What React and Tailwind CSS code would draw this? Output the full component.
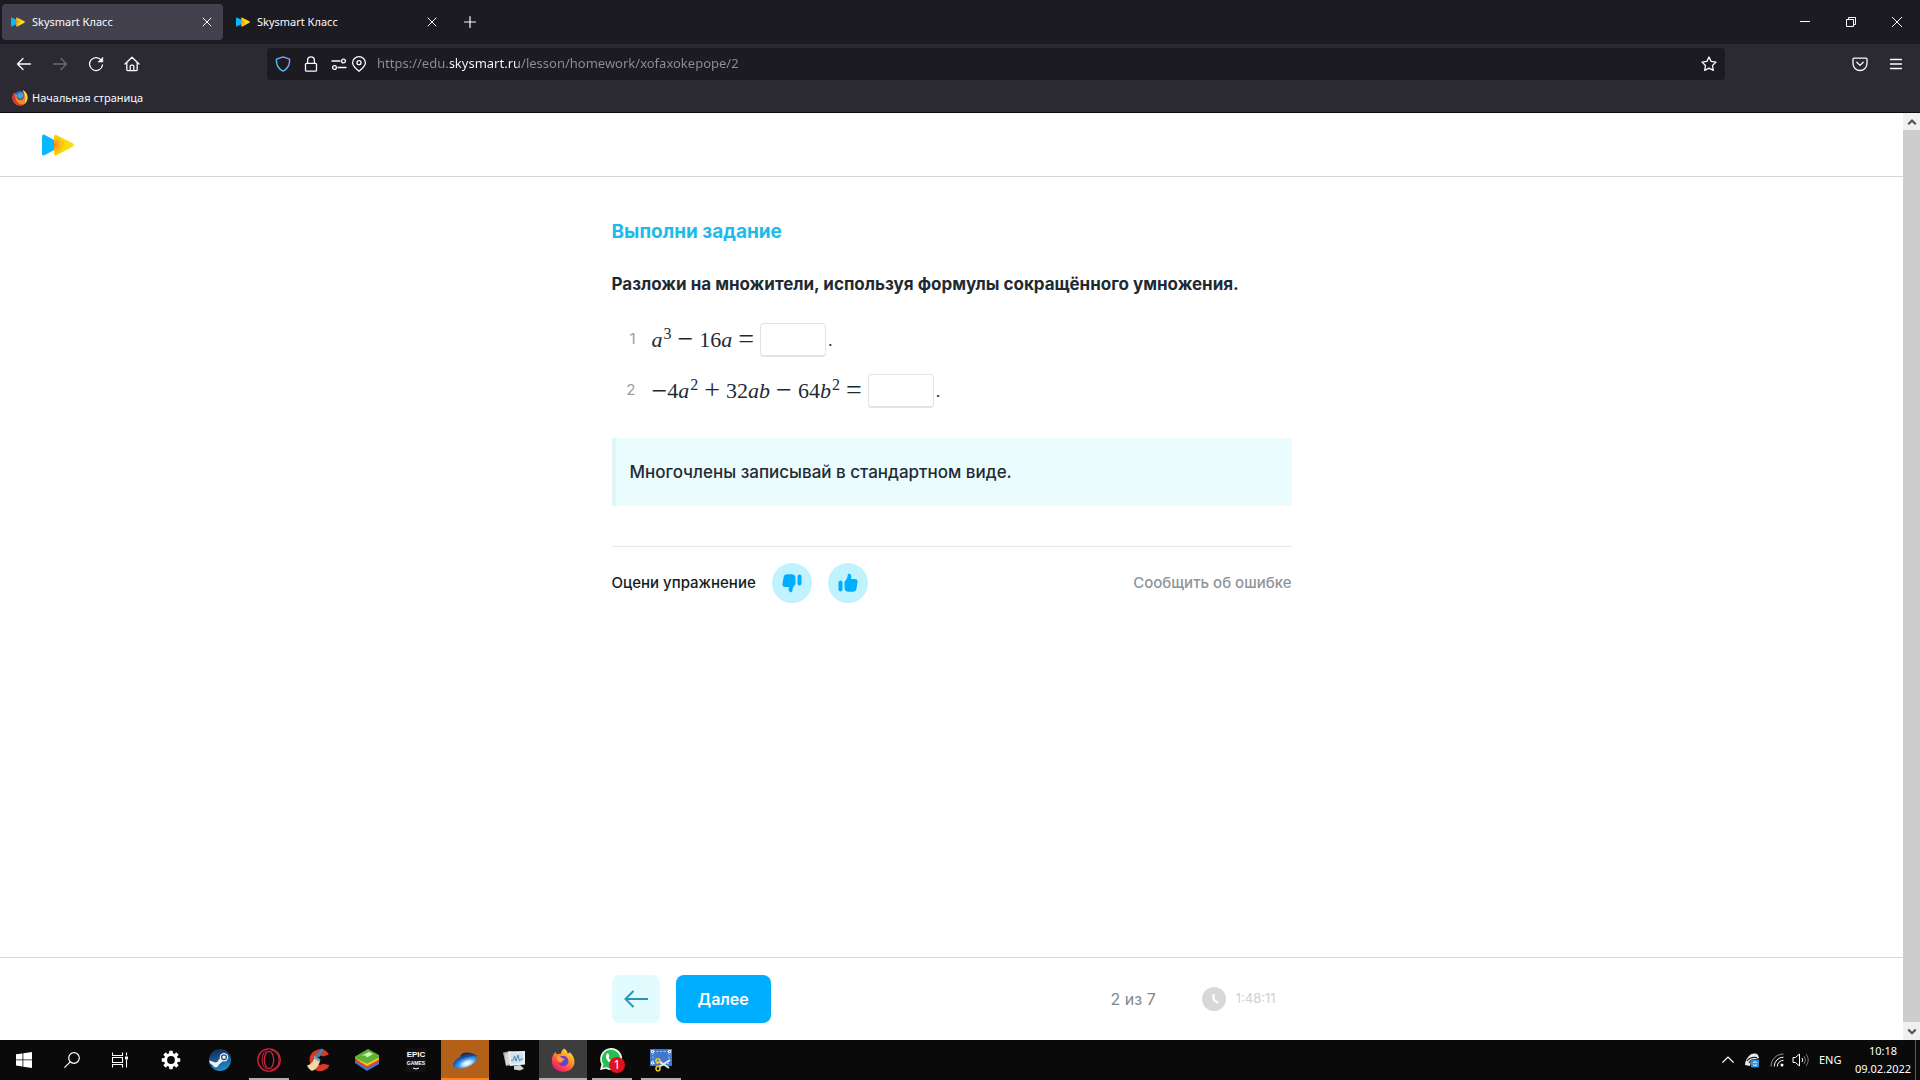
import { useState } from 'react'

const TABS = [
  { id: 1, title: 'Skysmart Класс', active: true },
  { id: 2, title: 'Skysmart Класс', active: false },
]

function SkysmartLogo({ className }) {
  return (
    <svg viewBox="0 0 32 22" className={className} aria-hidden="true">
      <defs>
        <radialGradient id="skyGlow" cx="0.05" cy="0.5" r="0.5">
          <stop offset="0" stopColor="#f58220" />
          <stop offset="0.4" stopColor="#fbb012" />
          <stop offset="1" stopColor="#fbdd0b" />
        </radialGradient>
      </defs>
      <path d="M0 2.5Q0 0 2.4 .8L17 8.5q4 2.5 0 5L2.4 21.2Q0 22 0 19.5z" fill="#08b8fa" />
      <path d="M12 2.5q0-2.5 2.6-1.4L30.600 9.300q2.400 1.700 0 3.400L14.600 21.200Q12 22 12 19.500z" fill="url(#skyGlow)" />
    </svg>
  )
}

function Stroke({ size = 16, width = 1.3, className, children }) {
  return (
    <svg width={size} height={size} viewBox="0 0 16 16" fill="none" stroke="currentColor" strokeWidth={width} strokeLinecap="round" strokeLinejoin="round" className={className} aria-hidden="true">
      {children}
    </svg>
  )
}

function FirefoxIcon({ size }) {
  return (
    <svg width={size} height={size} viewBox="0 0 24 24" aria-hidden="true">
      <defs>
        <linearGradient id="foxFire" x1="0.9" y1="0" x2="0.2" y2="1">
          <stop offset="0" stopColor="#fff04a" />
          <stop offset="0.4" stopColor="#ff9a1e" />
          <stop offset="0.75" stopColor="#ff3f50" />
          <stop offset="1" stopColor="#d5127e" />
        </linearGradient>
      </defs>
      <path d="M13 .5c2 1 3.300 2.700 3.700 5 1 .2 1.500-.5 1.700-1.500 3 2.500 5.100 5.800 5.100 10 0 5.700-5 9.700-11.300 9.700C5.500 23.700.8 19.400.8 13c0-3.700 1.500-6.800 3.700-9.200.2 1.300.7 2 1.500 2.500 1.200-.6 2.600-.7 3.600-.4C10.400 3.600 11.500 1.800 13 .5z" fill="url(#foxFire)" />
      <path d="M8 9.300c2-1.600 6-1.800 8 .3 2.300 2.600 1.700 6.500-1 8-3 1.700-7 .3-7.500-3 1.300 1 3.300.6 4.300-.8-2-.3-3.700-1.700-3.800-4.500z" fill="#6b3fd4" />
      <path d="M6 8.500c1.500-.5 3.500 0 5 1.800 1 .3 2.200.3 2.500 1-.4 1.200-2.500 1.300-3 2.700-2.800.4-5-2.200-4.500-5.500z" fill="#ffa436" />
    </svg>
  )
}

function BookmarkFoxIcon() {
  return (
    <svg width="16" height="16" viewBox="0 0 16 16" aria-hidden="true">
      <circle cx="8" cy="7.500" r="6.500" fill="#2f62b8" />
      <circle cx="8.500" cy="5.500" r="3" fill="#4f9be0" />
      <path d="M10.500 0c3 1.200 5 4 5 7.500C15.500 12 12.200 15.500 8 15.500S.5 12.300.5 8c0-2.500.8-4.300 2-5.500l.8 2 2.200.5c-1 .8-1 2.200-.3 3.200 1 2 3.900 2.400 5.500 1.200 2.200-1.600 2-5.800-.2-9.400z" fill="#f28b1c" />
      <path d="M.5 7.500C.6 12.500 4 15.500 8 15.500c1.500 0 2.500-.3 3.500-.8-4 0-7.500-2.200-8-6.700L2.500 2.500C1.200 3.800.5 5.500.5 7.500z" fill="#e0303a" />
      <path d="M10.500 0c3 1.200 5 4 5 7.500 0 2.500-1.200 4.800-3 6.200 1.700-4.500 1-9.700-2-13.700z" fill="#ffdc3e" />
    </svg>
  )
}

function TabStrip() {
  return (
    <header className="flex h-11 items-center bg-[#1c1b22] pl-0.5 text-[#fbfbfe]">
      <div className="flex flex-1 items-center gap-1">
        {TABS.map(tab => (
          <div key={tab.id} className={`flex h-9 w-[221px] items-center rounded pl-[9px] pr-2 ${tab.active ? 'bg-[#42414d]' : ''}`}>
            <button className="flex flex-1 items-center gap-[7px] text-left text-[11px]">
              <SkysmartLogo className="h-[10px] w-[14px]" />
              {tab.title}
            </button>
            <button aria-label="Закрыть вкладку" className="grid size-4 place-items-center">
              <Stroke size={16} width={1}><path d="M4 4l8 8M12 4l-8 8" /></Stroke>
            </button>
          </div>
        ))}
        <button aria-label="Новая вкладка" className="ml-1.5 grid size-6 place-items-center">
          <Stroke width={1.200}><path d="M8 2.500v11M2.500 8h11" /></Stroke>
        </button>
      </div>
      <div className="flex">
        <button aria-label="Свернуть" className="grid h-11 w-[46px] place-items-center">
          <svg width="10" height="10" stroke="currentColor" aria-hidden="true"><path d="M0 4.500h10" /></svg>
        </button>
        <button aria-label="Восстановить" className="grid h-11 w-[46px] place-items-center">
          <svg width="10" height="10" fill="none" stroke="currentColor" aria-hidden="true"><path d="M.5 2.500h7v7h-7zM2.500 2.500v-2h7v7h-2" /></svg>
        </button>
        <button aria-label="Закрыть" className="grid h-11 w-[46px] place-items-center">
          <svg width="10" height="10" stroke="currentColor" aria-hidden="true"><path d="M0 0l10 10M10 0L0 10" /></svg>
        </button>
      </div>
    </header>
  )
}

function Toolbar() {
  const [url, setUrl] = useState('https://edu.skysmart.ru/lesson/homework/xofaxokepope/2')
  return (
    <div className="flex h-10 items-center bg-[#2b2a33] pl-4 pr-4 text-[#fbfbfe]">
      <nav className="flex w-[251px] items-center gap-5">
        <button aria-label="Назад"><Stroke><path d="M1.500 8h13M7 2.500L1.500 8 7 13.500" /></Stroke></button>
        <button aria-label="Вперёд" className="text-[#6a6972]"><Stroke><path d="M1.500 8h13M9 2.500L14.500 8 9 13.500" /></Stroke></button>
        <button aria-label="Обновить">
          <Stroke><path d="M13.500 4.500A6.500 6.500 0 1 0 14.500 9" /><path d="M14.800 1.500v4.500h-4.500z" fill="currentColor" strokeWidth="0.6" /></Stroke>
        </button>
        <button aria-label="Домой">
          <Stroke><path d="M1 8l7-6.700L15 8M2.800 6.500V13.500q0 1.200 1.200 1.200h8q1.200 0 1.200-1.200V6.500M6.200 14.500v-4.200q0-1.200 1.200-1.200h1.200q1.200 0 1.200 1.200v4.200" /></Stroke>
        </button>
      </nav>
      <div className="flex h-8 flex-1 items-center rounded bg-[#1c1b22] pl-2 pr-2">
        <svg width="16" height="16" viewBox="0 0 16 16" fill="none" strokeWidth="1.400" strokeLinejoin="round" aria-hidden="true">
          <defs>
            <linearGradient id="shield" x1="1" y1="0" x2="0" y2="1">
              <stop offset="0" stopColor="#b58cf0" />
              <stop offset="0.5" stopColor="#5fb4ee" />
              <stop offset="1" stopColor="#3fc6e8" />
            </linearGradient>
          </defs>
          <path d="M8 .9l6.500 2.300c.5 4.800-1.500 9.500-6.500 12-5-2.500-7-7.200-6.500-12z" stroke="url(#shield)" />
        </svg>
        <Stroke className="ml-3"><path d="M3.500 7.300h9q1 0 1 1v5.900q0 1-1 1h-9q-1 0-1-1V8.300q0-1 1-1zM4.600 7V4.200a3.400 3.400 0 0 1 6.800 0V7" /></Stroke>
        <Stroke className="ml-3"><path d="M1 5h8M7 11.500h8" /><circle cx="12.500" cy="5" r="1.900" /><circle cx="3.500" cy="11.500" r="1.900" /></Stroke>
        <Stroke className="ml-1"><path d="M8 15.300C4.500 12.500 1.600 10 1.600 6.800a6.400 6.100 0 0 1 12.800 0C14.400 10 11.500 12.500 8 15.300z" /><circle cx="8" cy="6.700" r="2" /></Stroke>
        {/* domain part is lighter than the rest of the address */}
        <input
          aria-label="Адрес страницы"
          value={url}
          onChange={e => setUrl(e.target.value)}
          className="ml-2.5 min-w-0 flex-1 bg-[linear-gradient(90deg,#8f8e96_73px,#fbfbfe_73px,#fbfbfe_142px,#8f8e96_142px)] bg-clip-text text-[13px] text-transparent outline-none"
        />
        <button aria-label="Добавить в закладки">
          <Stroke><path d="M8 1l2.100 4.400 4.900.7-3.500 3.400.8 4.900L8 12.100l-4.300 2.300.8-4.900L1 6.100l4.900-.7z" /></Stroke>
        </button>
      </div>
      <div className="flex w-[179px] items-center justify-end gap-5">
        <button aria-label="Pocket"><Stroke><path d="M2 2.200h12q1 0 1 1V7.500a7 7 0 0 1-14 0V3.200q0-1 1-1zM4.800 6.300L8 9.400l3.200-3.100" /></Stroke></button>
        <button aria-label="Меню"><Stroke><path d="M2.500 3.500h11M2.500 8h11M2.500 12.500h11" /></Stroke></button>
      </div>
    </div>
  )
}

function Bookmarks() {
  return (
    <div className="flex h-[29px] items-center border-b border-[#0c0c0d] bg-[#2b2a33] pl-3 text-[11px] text-[#fbfbfe]">
      <a href="#home" className="flex items-center gap-1">
        <BookmarkFoxIcon />
        Начальная страница
      </a>
    </div>
  )
}

function Op({ children }) {
  return <span className="text-[28px]">{children}</span>
}

function Sup({ children }) {
  return <sup className="top-[-6px] ml-px text-base leading-none">{children}</sup>
}

function Answer({ label, value, onChange }) {
  return (
    <input
      aria-label={label}
      value={value}
      onChange={onChange}
      className="ml-1.5 h-[34px] w-[66px] rounded border border-b-2 border-[#e3e3e3] bg-white px-2 text-center text-lg outline-none"
    />
  )
}

function Thumb({ down }) {
  return (
    <svg width="20" height="20" viewBox="0 0 20 20" fill="#00aeff" className={down ? 'rotate-180' : ''} aria-hidden="true">
      <rect x="0.500" y="7.500" width="4" height="11" rx="2" />
      <path d="M6.500 9.500c0-1.300 1.200-2 2-3.200.8-1.200 1-2.500 1.200-4C9.900.8 11 .5 12 1c1.500.8 1.700 2.700 1 5h3.800c2 0 3 1.200 2.700 3l-1 6.500c-.4 2.200-1.500 3.200-3.700 3.200h-4.300c-2.700 0-4-1.300-4-3.700z" />
    </svg>
  )
}

function Exercise() {
  const [first, setFirst] = useState('')
  const [second, setSecond] = useState('')
  return (
    <section className="mx-auto w-full max-w-[680px] flex-1 pt-[39px] text-[#1f2b33]">
      <h1 className="text-[19px] font-bold leading-8 text-[#1cbbea]">Выполни задание</h1>
      <p className="mt-6 text-[17px] font-bold leading-6">Разложи на множители, используя формулы сокращённого умножения.</p>

      <ol className="mt-[18px]">
        <li className="flex h-[51px] items-center">
          <span className="w-6 text-right text-[15px] text-[#9a9fa2]">1</span>
          <span className="ml-4 flex items-center font-['Liberation_Serif',serif] text-[22px] leading-6">
            <i>a</i><Sup>3</Sup>
            <span className="mx-1.5"><Op>−</Op></span>
            16<i>a</i>
            <span className="ml-1.5"><Op>=</Op></span>
          </span>
          <Answer label="Ответ 1" value={first} onChange={e => setFirst(e.target.value)} />
          <span className="ml-0.5">.</span>
        </li>
        <li className="flex h-[51px] items-center">
          <span className="w-6 text-right text-[15px] text-[#9a9fa2]">2</span>
          <span className="ml-4 flex items-center font-['Liberation_Serif',serif] text-[22px] leading-6">
            <Op>−</Op>4<i>a</i><Sup>2</Sup>
            <span className="mx-1.5"><Op>+</Op></span>
            32<i>ab</i>
            <span className="mx-1.5"><Op>−</Op></span>
            64<i>b</i><Sup>2</Sup>
            <span className="ml-1.5"><Op>=</Op></span>
          </span>
          <Answer label="Ответ 2" value={second} onChange={e => setSecond(e.target.value)} />
          <span className="ml-0.5">.</span>
        </li>
      </ol>

      <p className="mt-[22px] border-l-4 border-[#e0f5f5] bg-[#ebfcff] px-3.5 py-[22px] text-[17px] font-medium leading-6">Многочлены записывай в стандартном виде.</p>

      <div className="mt-10 flex items-center border-t border-[#e6e8ea] pt-4 text-[15px] font-medium">
        <span className="text-[#111c24]">Оцени упражнение</span>
        <button aria-label="Не нравится" className="ml-4 grid size-10 place-items-center rounded-full bg-[#c0f3ff]"><Thumb down /></button>
        <button aria-label="Нравится" className="ml-4 grid size-10 place-items-center rounded-full bg-[#c0f3ff]"><Thumb /></button>
        <a href="#report" className="ml-auto text-[#8f9598]">Сообщить об ошибке</a>
      </div>
    </section>
  )
}

function LessonFooter() {
  return (
    <footer className="border-t border-[#d5d7d9]">
      <div className="mx-auto flex h-[82px] w-full max-w-[680px] items-center">
        <button aria-label="Назад к заданию" className="grid size-12 place-items-center rounded-lg bg-[#e2fbff]">
          <svg width="24" height="18" viewBox="0 0 24 18" fill="none" stroke="#2796b8" strokeWidth="2" aria-hidden="true"><path d="M24 9H1.500M9.500 1L1.500 9l8 8" /></svg>
        </button>
        <button className="ml-4 h-12 rounded-lg bg-[#00aeff] px-[22px] text-base font-semibold text-white">Далее</button>
        <span className="ml-auto text-base text-[#7d888c]">2 из 7</span>
        <svg width="24" height="24" viewBox="0 0 24 24" className="ml-[46px]" aria-hidden="true">
          <circle cx="12" cy="12" r="12" fill="#d8d8d8" />
          <path d="M11.500 7v5.500l4.500 3.500" fill="none" stroke="#fff" strokeWidth="2.200" />
        </svg>
        <time className="ml-2.5 mr-4 text-[13px] text-[#d0d0d0]">1:48:11</time>
      </div>
    </footer>
  )
}

function ScrollBar() {
  return (
    <div className="flex w-[17px] flex-col bg-[#f0f0f0] text-[#555]" aria-hidden="true">
      <span className="grid h-[17px] place-items-center"><Stroke size={12} width={3}><path d="M3 11l5-5 5 5" strokeLinecap="butt" /></Stroke></span>
      <span className="flex-1 bg-[#cdcdcd]" />
      <span className="grid h-[18px] place-items-center"><Stroke size={12} width={3}><path d="M3 6l5 5 5-5" strokeLinecap="butt" /></Stroke></span>
    </div>
  )
}

function WindowsIcon() {
  return <svg width="16" height="16" viewBox="0 0 16 16" fill="#fff" aria-hidden="true"><path d="M0 2.300l6.500-.9v6.100H0zM7.300 1.300L16 0v7.500H7.300zM0 8.300h6.500v6.200L0 13.600zM7.300 8.300H16V16l-8.700-1.300z" /></svg>
}

function SearchIcon() {
  return <svg width="16" height="16" viewBox="0 0 16 16" fill="none" stroke="#fff" strokeWidth="1.200" aria-hidden="true"><circle cx="10" cy="6" r="5.300" /><path d="M6.200 9.800L.4 15.600" /></svg>
}

function TaskViewIcon() {
  return (
    <svg width="16" height="16" viewBox="0 0 16 16" fill="none" stroke="#fff" strokeWidth="1.100" aria-hidden="true">
      <path d="M.5.500V3.500h10V.500M.5 15.500v-3h10v3M.5 5.500h10v5H.5zM14.500.500v3M14.500 8v7.500" />
      <path d="M13 4.500h3v3h-3z" fill="#fff" stroke="none" />
    </svg>
  )
}

function GearIcon() {
  return (
    <svg width="20" height="20" viewBox="-10 -10 20 20" fill="#fff" aria-hidden="true">
      {[0, 45, 90, 135].map(a => <rect key={a} x="-1.800" y="-9.200" width="3.600" height="18.400" transform={`rotate(${a})`} />)}
      <circle r="7" />
      <circle r="3.900" fill="#0a0a0a" />
    </svg>
  )
}

function SteamIcon() {
  return (
    <svg width="22" height="22" viewBox="0 0 22 22" aria-hidden="true">
      <defs>
        <linearGradient id="steam" x1="0" y1="0" x2="0.300" y2="1">
          <stop offset="0" stopColor="#12224b" />
          <stop offset="1" stopColor="#1f86c4" />
        </linearGradient>
      </defs>
      <circle cx="11" cy="11" r="11" fill="url(#steam)" />
      <path d="M.3 11.200l5.800 2.400 2-.6 3.200-4.200 2.300 3.700-3.800 3c-.3 2-1.800 3-3.400 2.700-1.400-.2-2.200-1-2.700-2.200L.8 14.300z" fill="#eef3f7" />
      <circle cx="15" cy="8.300" r="4.200" fill="#eef3f7" />
      <circle cx="15" cy="8.300" r="2.400" fill="#eef3f7" stroke="#24486f" strokeWidth="1.200" />
    </svg>
  )
}

function OperaIcon() {
  return (
    <svg width="24" height="24" viewBox="0 0 24 24" fill="none" stroke="#d3233f" strokeWidth="1.300" aria-hidden="true">
      <circle cx="12" cy="12" r="11.200" />
      <ellipse cx="12" cy="12" rx="4.700" ry="8.600" />
      <path d="M9.500 2.500C4 4.500 3.500 18 9.500 21.500M14 2c6 1.500 8 6 8 10s-2 8.500-8 10" strokeWidth="1" />
    </svg>
  )
}

function CCleanerIcon() {
  return (
    <svg width="24" height="24" viewBox="0 0 24 24" aria-hidden="true">
      <path d="M23 6.500C20.500 2 16 .5 11.500 1.700 5 3.500 2.500 9 4 15c1.500 6 7.500 9.500 13.500 7.500 3-1 5-2.700 5.800-5.500L17 15.800c-2.500 2-6 1.200-7-2-1-3.800 3-7.800 7-5.300z" fill="#d93a25" />
      <path d="M15.500.5l2 1-4.500 8-3.500-2z" fill="#3b86b5" />
      <path d="M9 9l5 4c-1 4.500-4 8.500-8 10-2-1-4-3-5-5.500 4-1 6.500-4 8-8.500z" fill="#f1d9a6" />
      <path d="M8.500 7.500l6 4-1 2.500L7.500 10z" fill="#5baed3" />
    </svg>
  )
}

function BlueStacksIcon() {
  return (
    <svg width="26" height="24" viewBox="0 0 26 24" aria-hidden="true">
      <path d="M1 15l12 8 12-7v-3H1z" fill="#2f80dd" />
      <path d="M1 13l12 7.500L25 14v-2.500H1z" fill="#e8402d" />
      <path d="M1 10.500L13 18l12-6.500V9.500H1z" fill="#ffc42c" />
      <path d="M1 8.500L14 1l11 6v2.500L13 15.700 1 10z" fill="#5cb531" />
      <path d="M8 7.500l7-3.500 4 2-6 3.500-1.500-2z" fill="#d9f2c4" />
    </svg>
  )
}

function EpicIcon() {
  return (
    <span className="flex h-6 w-5 flex-col items-center bg-[#121212] font-['Liberation_Sans',sans-serif] font-bold text-white">
      <span className="text-[8px] leading-[13px]">EPIC</span>
      <span className="text-[5px] leading-[5px]">GAMES</span>
      <svg width="8" height="4" stroke="#fff" fill="none" aria-hidden="true"><path d="M1 2l3 1 3-1" /></svg>
    </span>
  )
}

function OrbIcon() {
  return (
    <svg width="26" height="22" viewBox="0 0 26 22" aria-hidden="true">
      <defs>
        <radialGradient id="orb" cx="0.550" cy="0.700" r="0.600">
          <stop offset="0" stopColor="#fff" />
          <stop offset="0.250" stopColor="#cfeaff" />
          <stop offset="0.600" stopColor="#3c97ec" />
          <stop offset="1" stopColor="#1458b4" />
        </radialGradient>
      </defs>
      <path d="M8 8c1-4 4-5 8-4.500 4 .5 7 1.500 9 3.500l-3 3-15 2z" fill="#22303f" />
      <ellipse cx="13" cy="12.500" rx="12.500" ry="6" transform="rotate(-20 13 12.500)" fill="url(#orb)" />
      <path d="M4 11.500C9 7 16 5 23.500 6.500 18 7 10 9 4 11.500z" fill="#164a8c" />
    </svg>
  )
}

function MonitorsIcon() {
  return (
    <svg width="24" height="22" viewBox="0 0 24 22" aria-hidden="true">
      <path d="M1 3.500L9 2l1 14-6 1z" fill="#a9afb2" />
      <path d="M3 5l5-1 1 11-5 1z" fill="#d4d8da" />
      <path d="M6 2.500L23 2v13.500L8 17z" fill="#eceff0" />
      <path d="M8 4.500l13-.5v9.500L9.500 15z" fill="#cfe1ec" />
      <path d="M9 11.500l2.500-.5 1-4 1.500 5 2-6 1.500 6 1.500-2h2" fill="none" stroke="#3f7fae" strokeWidth="0.900" />
      <path d="M12 17l6-1 4 3.500-4 2-6-1z" fill="#d3d6d8" />
    </svg>
  )
}

function WhatsAppIcon() {
  return (
    <span className="relative block size-6">
      <svg width="22" height="22" viewBox="0 0 22 22" aria-hidden="true">
        <path d="M11 0a11 11 0 1 1-5 20.700L0 22l1.500-5.700A11 11 0 0 1 11 0z" fill="#f2f6f2" />
        <path d="M11 1.800a9.200 9.200 0 1 1-4.500 17.200l-4 1 1-3.800A9.200 9.200 0 0 1 11 1.800z" fill="#25c04f" />
        <path d="M7 5.500c1-.5 1.500 0 2 1.500s0 1.500-.5 2.500c1 2 2.500 3.300 4.500 4 1-1 1.200-1.700 2.500-1 2 1 1.500 1.500 1 2.500-1.500 2-4.500 1.500-7-.5s-5-6-2.500-9z" fill="#fff" />
      </svg>
      <span className="absolute left-[9px] top-[9px] grid size-4 place-items-center rounded-full bg-[#e3111d] text-xs leading-none text-white">1</span>
    </span>
  )
}

function SnipIcon() {
  return (
    <svg width="24" height="24" viewBox="0 0 24 24" fill="none" aria-hidden="true">
      <path d="M1 1h22v17H1z" fill="#3f78cc" />
      <path d="M4 3.500h16v12H4z" stroke="#a9c6ef" strokeDasharray="2 1.500" />
      <path d="M2.500 2.500h2v2h-2zM19.500 2.500h2v2h-2zM2.500 14h2v2h-2z" stroke="#e8f0fb" />
      <path d="M10 13l10 7M10 19l11-7" stroke="#e6e6e6" strokeWidth="2" />
      <ellipse cx="9" cy="12.500" rx="2" ry="1.800" stroke="#e3c52f" strokeWidth="1.600" />
      <ellipse cx="9" cy="20.500" rx="2" ry="2.300" stroke="#e3c52f" strokeWidth="1.600" />
    </svg>
  )
}

const SYSTEM = [
  { name: 'Пуск', icon: <WindowsIcon /> },
  { name: 'Поиск', icon: <SearchIcon /> },
  { name: 'Представление задач', icon: <TaskViewIcon /> },
]

const APPS = [
  { name: 'Параметры', icon: <GearIcon /> },
  { name: 'Steam', icon: <SteamIcon /> },
  { name: 'Opera', icon: <OperaIcon />, open: true },
  { name: 'CCleaner', icon: <CCleanerIcon /> },
  { name: 'BlueStacks', icon: <BlueStacksIcon /> },
  { name: 'Epic', icon: <EpicIcon /> },
  { name: 'Orb', icon: <OrbIcon />, tile: 'bg-[#b5601a]', bar: 'w-12 bg-[#ff8416]' },
  { name: 'Монитор', icon: <MonitorsIcon /> },
  { name: 'Firefox', icon: <FirefoxIcon size={24} />, tile: 'bg-[#3d3d3d]', bar: 'w-12 bg-[#b8adb2]' },
  { name: 'WhatsApp', icon: <WhatsAppIcon />, open: true },
  { name: 'Ножницы', icon: <SnipIcon />, open: true },
]

function TaskBar() {
  return (
    <div className="flex h-10 items-stretch bg-[#0a0a0a] text-[11px] text-white">
      <div className="flex">
        {SYSTEM.map(item => (
          <button key={item.name} aria-label={item.name} className="grid w-12 place-items-center">{item.icon}</button>
        ))}
      </div>
      <div className="ml-[3px] flex gap-px">
        {APPS.map(app => (
          <button key={app.name} aria-label={app.name} className={`flex w-12 flex-col items-center ${app.tile ?? ''}`}>
            <span className="flex flex-1 items-center">{app.icon}</span>
            <span className={`-mt-0.5 h-0.5 ${app.bar ?? (app.open ? 'w-10 bg-[#b3adb0]' : '')}`} />
          </button>
        ))}
      </div>
      <div className="ml-auto flex items-center">
        <button aria-label="Скрытые значки"><Stroke size={12} width={1.500}><path d="M1 11l7-7 7 7" /></Stroke></button>
        <svg width="16" height="16" viewBox="0 0 16 16" className="ml-2.5" aria-hidden="true">
          <path d="M1 13c0-4 2-7 4-9 3-3 7-3 9-1l1 3-4 1-4 1-1 6z" fill="#e8ecee" />
          <path d="M3 9c2-3 6-4 10-3.500M5 11c1-2 2-3 4-3.500" stroke="#222" strokeWidth="1.200" fill="none" />
          <rect x="7" y="7.500" width="8" height="8" rx="1" fill="#2f8fd6" />
          <path d="M9 11c1-1.500 3-1.500 4 0M13 12.500c-1 1.300-3 1.300-4 0" stroke="#fff" fill="none" />
        </svg>
        <svg width="14" height="14" viewBox="0 0 14 14" fill="none" stroke="#fff" className="ml-2.5" aria-hidden="true">
          <path d="M1 13.500C1 6.500 6.500 1 13.500 1" stroke="#999" />
          <path d="M4.200 13.500a9.300 9.300 0 0 1 9.300-9.300M7.300 13.500a6.200 6.200 0 0 1 6.200-6.200" />
          <circle cx="12" cy="12" r="1.500" fill="#fff" stroke="none" />
        </svg>
        <svg width="17" height="16" viewBox="0 0 17 16" fill="none" stroke="#fff" className="ml-2" aria-hidden="true">
          <path d="M1 5.500h2.500L7.500 2v12L3.500 10.500H1zM10 6q1.500 2 0 4" />
          <path d="M12 4q3 4 0 8M14 2q4.500 6 0 12" stroke="#777" />
        </svg>
        <span className="ml-2.5 w-6">ENG</span>
        <div className="ml-2.5 flex w-[60px] flex-col items-center leading-[18px]">
          <time>10:18</time>
          <time>09.02.2022</time>
        </div>
        <span className="ml-0.5 mr-1 h-10 border-l border-[#5a5a5a]" />
      </div>
    </div>
  )
}

export default function App() {
  return (
    <div className="flex min-h-screen flex-col font-['Noto_Sans',sans-serif]">
      <TabStrip />
      <Toolbar />
      <Bookmarks />
      <div className="flex flex-1 bg-white">
        <main className="flex flex-1 flex-col font-['Inter',sans-serif]">
          <div className="flex h-16 items-center border-b border-[#d5d7d9] pl-[42px]">
            <a href="#main" aria-label="Skysmart"><SkysmartLogo className="h-[22px] w-8" /></a>
          </div>
          <Exercise />
          <LessonFooter />
        </main>
        <ScrollBar />
      </div>
      <TaskBar />
    </div>
  )
}
